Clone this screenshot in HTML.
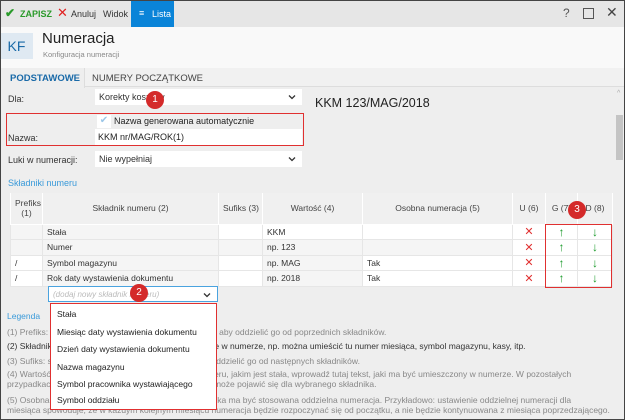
<!DOCTYPE html><html><head><style>
*{box-sizing:border-box;margin:0;padding:0}
body{width:625px;height:420px;overflow:hidden;font-family:"Liberation Sans",sans-serif;font-size:9px;color:#333;background:#eee;position:relative}
.a{position:absolute}
.border{position:absolute;inset:0;border:1px solid #444;pointer-events:none;z-index:20}
.sel{position:absolute;background:#fff;height:16px;padding:3px 4px;font-size:9px}
.chev{position:absolute;right:6px;top:5px;width:8px;height:6px}
.badge{position:absolute;width:18px;height:18px;border-radius:50%;background:#d42a2a;color:#fff;font-size:10px;text-align:center;line-height:18px;z-index:10}
.rbox{position:absolute;border:1.5px solid #e03030;z-index:9}
table{border-collapse:collapse;position:absolute;left:10px;top:193px;width:602px;font-size:8.5px;table-layout:fixed}
td,th{border:1px solid #e6e6e6;height:15.5px;padding:0 4px;font-weight:normal;white-space:nowrap;overflow:hidden}
th{height:31px;background:#f0f0f0;color:#444;text-align:center;border:1px solid #fff;border-top:none}
td{background:#fff}
td.g{background:#f5f5f5}
.x{color:#e03030;text-align:center;font-size:11px}
.up{color:#1a9a2a;text-align:center;font-size:12px;font-weight:bold}
.leg{position:absolute;left:7px;font-size:8.5px;color:#888;white-space:nowrap}
.dd{position:absolute;left:50px;top:303px;width:167px;height:107px;background:#fff;border:1.5px solid #e03030;z-index:8}
.dd div{position:absolute;left:6px;font-size:8.5px;color:#222}
</style></head><body>
<div class="a" style="left:0;top:0;width:625px;height:27px;background:#e6e6e6"></div>
<div class="a" style="left:5px;top:6px;color:#2a9a2a;font-size:12px;font-weight:bold">✔</div>
<div class="a" style="left:20px;top:9px;color:#2a9a2a;font-weight:bold">ZAPISZ</div>
<div class="a" style="left:57px;top:5px;color:#e02020;font-size:13px">✕</div>
<div class="a" style="left:71px;top:9px">Anuluj</div>
<div class="a" style="left:103px;top:9px">Widok</div>
<div class="a" style="left:131px;top:0;width:43px;height:27px;background:#0a84d8;color:#fff"><span style="position:absolute;left:8px;top:8px">≡</span><span style="position:absolute;left:21px;top:9px">Lista</span></div>
<div class="a" style="left:563px;top:6px;font-size:12px;color:#555">?</div>
<div class="a" style="left:583px;top:8px;width:11px;height:11px;border:1.5px solid #555"></div>
<div class="a" style="left:606px;top:4px;font-size:14px;color:#444">✕</div>
<div class="a" style="left:0;top:27px;width:625px;height:41px;background:#f9f9f9"></div>
<div class="a" style="left:0;top:33px;width:33px;height:26px;background:#dfe9f2;color:#1a6aa8;font-size:14px;text-align:center;line-height:26px">KF</div>
<div class="a" style="left:42px;top:30px;font-size:15px;color:#222">Numeracja</div>
<div class="a" style="left:43px;top:50px;font-size:7.5px;color:#888">Konfiguracja numeracji</div>
<div class="a" style="left:0;top:68px;width:625px;height:19px;background:#f1f1f1;border-bottom:1px solid #ddd"></div>
<div class="a" style="left:0;top:68px;width:85px;height:20px;background:#eee;border-right:1px solid #ddd"></div>
<div class="a" style="left:10px;top:73px;color:#1a6aa8;font-weight:bold;font-size:9.5px">PODSTAWOWE</div>
<div class="a" style="left:92px;top:73px;color:#444;font-size:9.5px">NUMERY POCZĄTKOWE</div>
<div class="a" style="left:617px;top:90px;font-size:7px;color:#aaa">^</div>
<div class="a" style="left:616px;top:115px;width:7px;height:45px;background:#c4c4c4"></div>
<div class="a" style="left:8px;top:94px">Dla:</div>
<div class="sel" style="left:95px;top:89px;width:207px">Korekty kosztów<svg class="chev" viewBox="0 0 8 6"><path d="M1 1.5L4 4.5L7 1.5" stroke="#333" stroke-width="1.3" fill="none"/></svg></div>
<div class="badge" style="left:146px;top:91px">1</div>
<div class="a" style="left:315px;top:96px;font-size:12.5px;color:#222">KKM 123/MAG/2018</div>
<div class="rbox" style="left:6px;top:113px;width:298px;height:33px"></div>
<div class="a" style="left:97px;top:115px;width:14px;height:13px;background:#fff;color:#9cc7e8;font-size:10px;text-align:center">✔</div>
<div class="a" style="left:114px;top:116px;color:#222">Nazwa generowana automatycznie</div>
<div class="a" style="left:8px;top:133px">Nazwa:</div>
<div class="a" style="left:95px;top:129px;width:207px;height:16px;background:#fff;padding:3px 3px;color:#222">KKM nr/MAG/ROK(1)</div>
<div class="a" style="left:8px;top:155px">Luki w numeracji:</div>
<div class="sel" style="left:95px;top:151px;width:207px">Nie wypełniaj<svg class="chev" viewBox="0 0 8 6"><path d="M1 1.5L4 4.5L7 1.5" stroke="#333" stroke-width="1.3" fill="none"/></svg></div>
<div class="a" style="left:8px;top:178px;color:#3a9ad9;font-size:9px">Składniki numeru</div>
<table>
<colgroup><col style="width:32px"><col style="width:176px"><col style="width:44px"><col style="width:100px"><col style="width:150px"><col style="width:33px"><col style="width:32px"><col style="width:35px"></colgroup>
<tr><th>Prefiks<br>(1)</th><th>Składnik numeru (2)</th><th>Sufiks (3)</th><th>Wartość (4)</th><th>Osobna numeracja (5)</th><th>U (6)</th><th>G (7)</th><th>D (8)</th></tr>
<tr><td class="g"></td><td class="g">Stała</td><td></td><td>KKM</td><td></td><td class="x">✕</td><td class="up">↑</td><td class="up">↓</td></tr>
<tr><td class="g"></td><td class="g">Numer</td><td class="g"></td><td class="g">np. 123</td><td class="g"></td><td class="x">✕</td><td class="up">↑</td><td class="up">↓</td></tr>
<tr><td>/</td><td class="g">Symbol magazynu</td><td></td><td class="g">np. MAG</td><td>Tak</td><td class="x">✕</td><td class="up">↑</td><td class="up">↓</td></tr>
<tr><td>/</td><td class="g">Rok daty wystawienia dokumentu</td><td></td><td class="g">np. 2018</td><td>Tak</td><td class="x">✕</td><td class="up">↑</td><td class="up">↓</td></tr>
</table>
<div class="rbox" style="left:545px;top:224px;width:67px;height:64px"></div>
<div class="badge" style="left:568px;top:201px">3</div>
<div class="sel" style="left:48px;top:286px;width:170px;border:1px solid #4aa3df;color:#bbb;font-style:italic;font-size:8px">(dodaj nowy składnik numeru)<svg class="chev" viewBox="0 0 8 6"><path d="M1 1.5L4 4.5L7 1.5" stroke="#333" stroke-width="1.3" fill="none"/></svg></div>
<div class="badge" style="left:130px;top:284px">2</div>
<div class="leg" style="top:311px;color:#3a9ad9">Legenda</div>
<div class="leg" style="top:327px">(1) Prefiks: stała wartość wpisywana przed składnikiem, aby oddzielić go od poprzednich składników.</div>
<div class="leg" style="top:341px;color:#333">(2) Składnik numeru: wartości mogące być umieszczone w numerze, np. można umieścić tu numer miesiąca, symbol magazynu, kasy, itp.</div>
<div class="leg" style="top:356px">(3) Sufiks: stała wartość wpisywana po składniku, aby oddzielić go od następnych składników.</div>
<div class="leg" style="top:369px">(4) Wartość: w przypadku wybrania jako składnika numeru, jakim jest stała,  wprowadź tutaj tekst, jaki ma być umieszczony  w numerze. W pozostałych</div>
<div class="leg" style="top:379px">przypadkach pokazana jest przykładowa wartość, jaka może pojawić się dla wybranego składnika.</div>
<div class="leg" style="top:395px">(5) Osobna numeracja: określa, czy dla wartości składnika ma być stosowana oddzielna numeracja. Przykładowo: ustawienie oddzielnej numeracji dla</div>
<div class="leg" style="top:405px">miesiąca spowoduje, że w każdym kolejnym miesiącu numeracja będzie rozpoczynać się od początku, a nie będzie kontynuowana z miesiąca poprzedzającego.</div>
<div class="dd">
<div style="top:5px">Stała</div>
<div style="top:23px">Miesiąc daty wystawienia dokumentu</div>
<div style="top:40px">Dzień daty wystawienia dokumentu</div>
<div style="top:58px">Nazwa magazynu</div>
<div style="top:75px">Symbol pracownika wystawiającego</div>
<div style="top:91px">Symbol oddziału</div>
</div>
<div class="border"></div>
</body></html>
